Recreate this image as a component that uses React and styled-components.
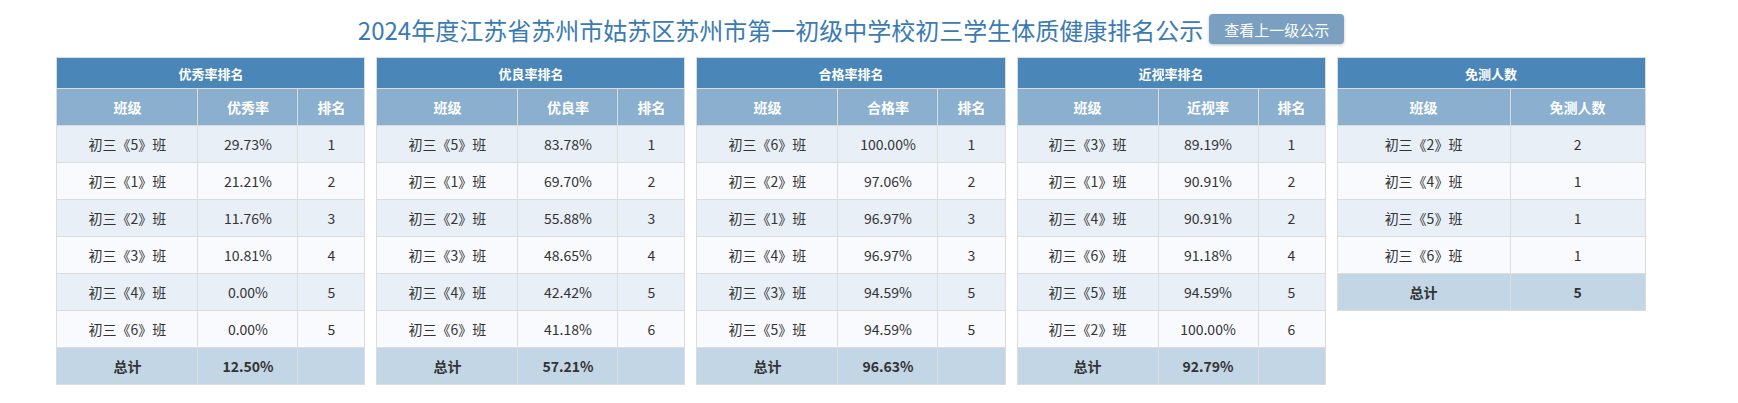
import React from 'react';
import styled, { createGlobalStyle } from 'styled-components';

const GlobalStyle = createGlobalStyle`
  body {
    margin: 0;
    background: #fff;
    font-family: "Microsoft YaHei", "Noto Sans CJK SC", "Noto Sans", sans-serif;
  }
`;

const tables = [
  {
    title: '优秀率排名',
    cols: ['班级', '优秀率', '排名'],
    widths: [141, 100, 67],
    rows: [
      ['初三《5》班', '29.73%', '1'],
      ['初三《1》班', '21.21%', '2'],
      ['初三《2》班', '11.76%', '3'],
      ['初三《3》班', '10.81%', '4'],
      ['初三《4》班', '0.00%', '5'],
      ['初三《6》班', '0.00%', '5'],
    ],
    total: ['总计', '12.50%', ''],
  },
  {
    title: '优良率排名',
    cols: ['班级', '优良率', '排名'],
    widths: [141, 100, 67],
    rows: [
      ['初三《5》班', '83.78%', '1'],
      ['初三《1》班', '69.70%', '2'],
      ['初三《2》班', '55.88%', '3'],
      ['初三《3》班', '48.65%', '4'],
      ['初三《4》班', '42.42%', '5'],
      ['初三《6》班', '41.18%', '6'],
    ],
    total: ['总计', '57.21%', ''],
  },
  {
    title: '合格率排名',
    cols: ['班级', '合格率', '排名'],
    widths: [141, 100, 67],
    rows: [
      ['初三《6》班', '100.00%', '1'],
      ['初三《2》班', '97.06%', '2'],
      ['初三《1》班', '96.97%', '3'],
      ['初三《4》班', '96.97%', '3'],
      ['初三《3》班', '94.59%', '5'],
      ['初三《5》班', '94.59%', '5'],
    ],
    total: ['总计', '96.63%', ''],
  },
  {
    title: '近视率排名',
    cols: ['班级', '近视率', '排名'],
    widths: [141, 100, 67],
    rows: [
      ['初三《3》班', '89.19%', '1'],
      ['初三《1》班', '90.91%', '2'],
      ['初三《4》班', '90.91%', '2'],
      ['初三《6》班', '91.18%', '4'],
      ['初三《5》班', '94.59%', '5'],
      ['初三《2》班', '100.00%', '6'],
    ],
    total: ['总计', '92.79%', ''],
  },
  {
    title: '免测人数',
    cols: ['班级', '免测人数'],
    widths: [173, 135],
    rows: [
      ['初三《2》班', '2'],
      ['初三《4》班', '1'],
      ['初三《5》班', '1'],
      ['初三《6》班', '1'],
    ],
    total: ['总计', '5'],
  },
];

const App = () => {
  return (
    <Page>
      <GlobalStyle />
      <Header>
        <Title>2024年度江苏省苏州市姑苏区苏州市第一初级中学校初三学生体质健康排名公示</Title>
        <UpButton>查看上一级公示</UpButton>
      </Header>
      <Tables>
        {tables.map((t) => (
          <RankTable key={t.title}>
            <colgroup>
              {t.widths.map((w, i) => (
                <col key={i} style={{ width: w }} />
              ))}
            </colgroup>
            <thead>
              <tr>
                <Caption colSpan={t.cols.length}>{t.title}</Caption>
              </tr>
              <tr>
                {t.cols.map((c) => (
                  <HeadCell key={c}>{c}</HeadCell>
                ))}
              </tr>
            </thead>
            <tbody>
              {t.rows.map((r, i) => (
                <Row key={i} $odd={i % 2 === 0}>
                  {r.map((v, j) => (
                    <Cell key={j}>{v}</Cell>
                  ))}
                </Row>
              ))}
              <TotalRow>
                {t.total.map((v, j) => (
                  <Cell key={j}>{v}</Cell>
                ))}
              </TotalRow>
            </tbody>
          </RankTable>
        ))}
      </Tables>
    </Page>
  );
};

export default App;

const Page = styled.div`
  width: 1702px;
`;

const Header = styled.div`
  display: flex;
  justify-content: center;
  align-items: center;
  gap: 6px;
  height: 57px;
  padding-top: 1px;
  box-sizing: border-box;
`;

const Title = styled.h1`
  margin: 0;
  font-size: 24px;
  font-weight: normal;
  color: #3b7bb3;
`;

const UpButton = styled.button`
  height: 30px;
  width: 135px;
  border: none;
  border-radius: 4px;
  background: #7a9fc0;
  color: #fff;
  font-family: inherit;
  font-size: 15px;
  box-shadow: 0 1px 3px rgba(0, 0, 0, 0.25);
  cursor: pointer;
`;

const Tables = styled.div`
  display: flex;
  justify-content: center;
  align-items: flex-start;
  gap: 11px;
`;

const RankTable = styled.table`
  width: 308px;
  border-collapse: collapse;
  table-layout: fixed;
  border: 1px solid #dcdcdc;
  font-size: 14px;
  color: #333;
  text-align: center;
`;

const Caption = styled.th`
  height: 30px;
  padding: 0;
  background: #4a86b8;
  color: #fff;
  font-size: 13px;
  font-weight: bold;
  border: 1px solid #dcdcdc;
`;

const HeadCell = styled.th`
  height: 36px;
  padding: 0;
  background: #8aafcf;
  color: #fff;
  font-weight: bold;
  border: 1px solid #dcdcdc;
`;

const Row = styled.tr`
  background: ${({ $odd }) => ($odd ? '#e8eff7' : '#f8fafd')};
`;

const TotalRow = styled.tr`
  background: #c3d6e5;
  font-weight: bold;
`;

const Cell = styled.td`
  height: 36px;
  padding: 0;
  border: 1px solid #dcdcdc;
`;
